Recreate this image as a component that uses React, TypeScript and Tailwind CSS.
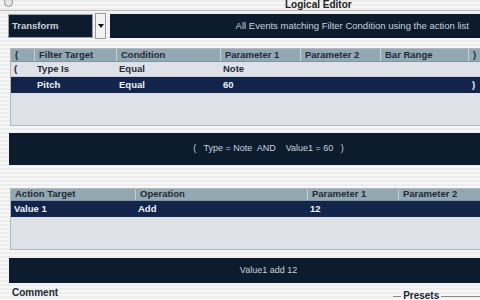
import React from "react";

const stripe =
  "bg-[repeating-linear-gradient(180deg,#ededed_0px,#ededed_2px,#f7f7f7_2px,#f7f7f7_4px)]";

function Cell({ w, children, sep = true, className = "" }: { w: string; children?: React.ReactNode; sep?: boolean; className?: string }) {
  return (
    <div className={`${w} shrink-0 h-full flex items-center pl-[4px] ${sep ? "border-l border-[#c3d0d6]" : ""} ${className}`}>
      {children}
    </div>
  );
}

function RowCell({ w, children, className = "" }: { w: string; children?: React.ReactNode; className?: string }) {
  return <div className={`${w} shrink-0 h-full flex items-center pl-[3px] ${className}`}>{children}</div>;
}

export default function App() {
  return (
    <div className={`w-[480px] h-[300px] overflow-hidden ${stripe} text-[#1b2733]`} style={{ fontFamily: '"Liberation Sans", Arial, sans-serif' }}>
      <div className="w-[540px]">
        {/* title bar */}
        <div className="relative h-[11px] border-b border-[#b8b8b8]">
          <div className="absolute left-[4px] top-[-3px] w-[9px] h-[10px] rounded-full border border-[#8a8a8a] bg-[#e6e6e6]" />
          <div className="absolute left-[285px] top-[-1px] text-[10px] font-bold leading-[12px] text-[#222]">Logical Editor</div>
        </div>

        {/* top row */}
        <div className="flex items-start mt-[2px] h-[26px]">
          <div className="ml-[8px] mt-[1px] w-[85px] h-[24px] bg-[#0c1b2d] border border-[#9aa3ab] flex items-center pl-[3px] text-[9.5px] font-bold text-[#c9d2da]">
            Transform
          </div>
          <div className="ml-[2px] w-[11px] h-[26px] bg-[#f2f2f2] border border-[#9a9a9a] flex items-center justify-center">
            <svg width="6" height="4" viewBox="0 0 6 4"><path d="M0 0 L6 0 L3 4 Z" fill="#111" /></svg>
          </div>
          <div className="ml-[4px] mt-[1px] w-[370px] h-[24px] bg-[#0c1b2d] flex items-center justify-end pr-[11px] text-[9.5px] text-[#c9d2da]">
            All Events matching Filter Condition using the action list
          </div>
        </div>

        {/* filter table */}
        <div className="ml-[10px] mt-[9px] w-[530px] h-[78px] border border-[#b4b8bc] bg-[#dfe1e8] text-[9.5px] font-bold">
          <div className="flex h-[13px] bg-[#92a8b2] text-[#1e2a36] border-b border-[#7f959f]">
            <Cell w="w-[23px]" sep={false} className="pl-[3px]">(</Cell>
            <Cell w="w-[82px]">Filter Target</Cell>
            <Cell w="w-[104px]">Condition</Cell>
            <Cell w="w-[80px]">Parameter 1</Cell>
            <Cell w="w-[80px]">Parameter 2</Cell>
            <Cell w="w-[88px]">Bar Range</Cell>
            <Cell w="w-[60px]">)</Cell>
          </div>
          <div className="flex h-[15px] text-[#1e2a36] border-b border-[#c9ccd3]">
            <RowCell w="w-[23px]">(</RowCell>
            <RowCell w="w-[82px]">Type Is</RowCell>
            <RowCell w="w-[104px]">Equal</RowCell>
            <RowCell w="w-[80px]">Note</RowCell>
            <RowCell w="w-[80px]"></RowCell>
            <RowCell w="w-[88px]"></RowCell>
            <RowCell w="w-[60px]"></RowCell>
          </div>
          <div className="flex h-[16px] bg-[#12244a] text-[#eef2f6]">
            <RowCell w="w-[23px]"></RowCell>
            <RowCell w="w-[82px]">Pitch</RowCell>
            <RowCell w="w-[104px]">Equal</RowCell>
            <RowCell w="w-[80px]">60</RowCell>
            <RowCell w="w-[80px]"></RowCell>
            <RowCell w="w-[88px]"></RowCell>
            <RowCell w="w-[60px]" className="pl-[4px]">)</RowCell>
          </div>
        </div>

        {/* condition bar */}
        <div className="ml-[9px] mt-[7px] w-[519px] h-[32px] bg-[#0c1b2d] flex items-center justify-center text-[9px] text-[#c9d2da] whitespace-pre">
          {"(   Type = Note  AND    Value1 = 60   )"}
        </div>

        {/* action table */}
        <div className="ml-[10px] mt-[23px] w-[530px] h-[62px] border border-[#b4b8bc] bg-[#dfe1e8] text-[9.5px] font-bold">
          <div className="flex h-[12px] bg-[#92a8b2] text-[#1e2a36] border-b border-[#7f959f]">
            <Cell w="w-[124px]" sep={false}>Action Target</Cell>
            <Cell w="w-[172px]">Operation</Cell>
            <Cell w="w-[91px]">Parameter 1</Cell>
            <Cell w="w-[140px]">Parameter 2</Cell>
          </div>
          <div className="flex h-[16px] bg-[#12244a] text-[#eef2f6]">
            <RowCell w="w-[124px]" className="pl-[1px]">Value 1</RowCell>
            <RowCell w="w-[172px]">Add</RowCell>
            <RowCell w="w-[91px]">12</RowCell>
            <RowCell w="w-[140px]"></RowCell>
          </div>
        </div>

        {/* action bar */}
        <div className="ml-[9px] mt-[8px] w-[519px] h-[25px] bg-[#0c1b2d] flex items-center justify-center text-[9px] text-[#c9d2da]">
          Value1 add 12
        </div>

        {/* bottom */}
        <div className="flex items-start mt-[4px] h-[20px]">
          <div className="ml-[12px] text-[10px] font-bold leading-[12px] text-[#1b2733]">Comment</div>
          <div className="ml-[335px] mt-[3px] flex items-center w-[140px]">
            <div className="w-[8px] h-px bg-[#8a8a8a]" />
            <div className="px-[2px] text-[10px] font-bold text-[#1b2733] leading-[12px]">Presets</div>
            <div className="flex-1 h-px bg-[#8a8a8a]" />
          </div>
        </div>
      </div>
    </div>
  );
}
